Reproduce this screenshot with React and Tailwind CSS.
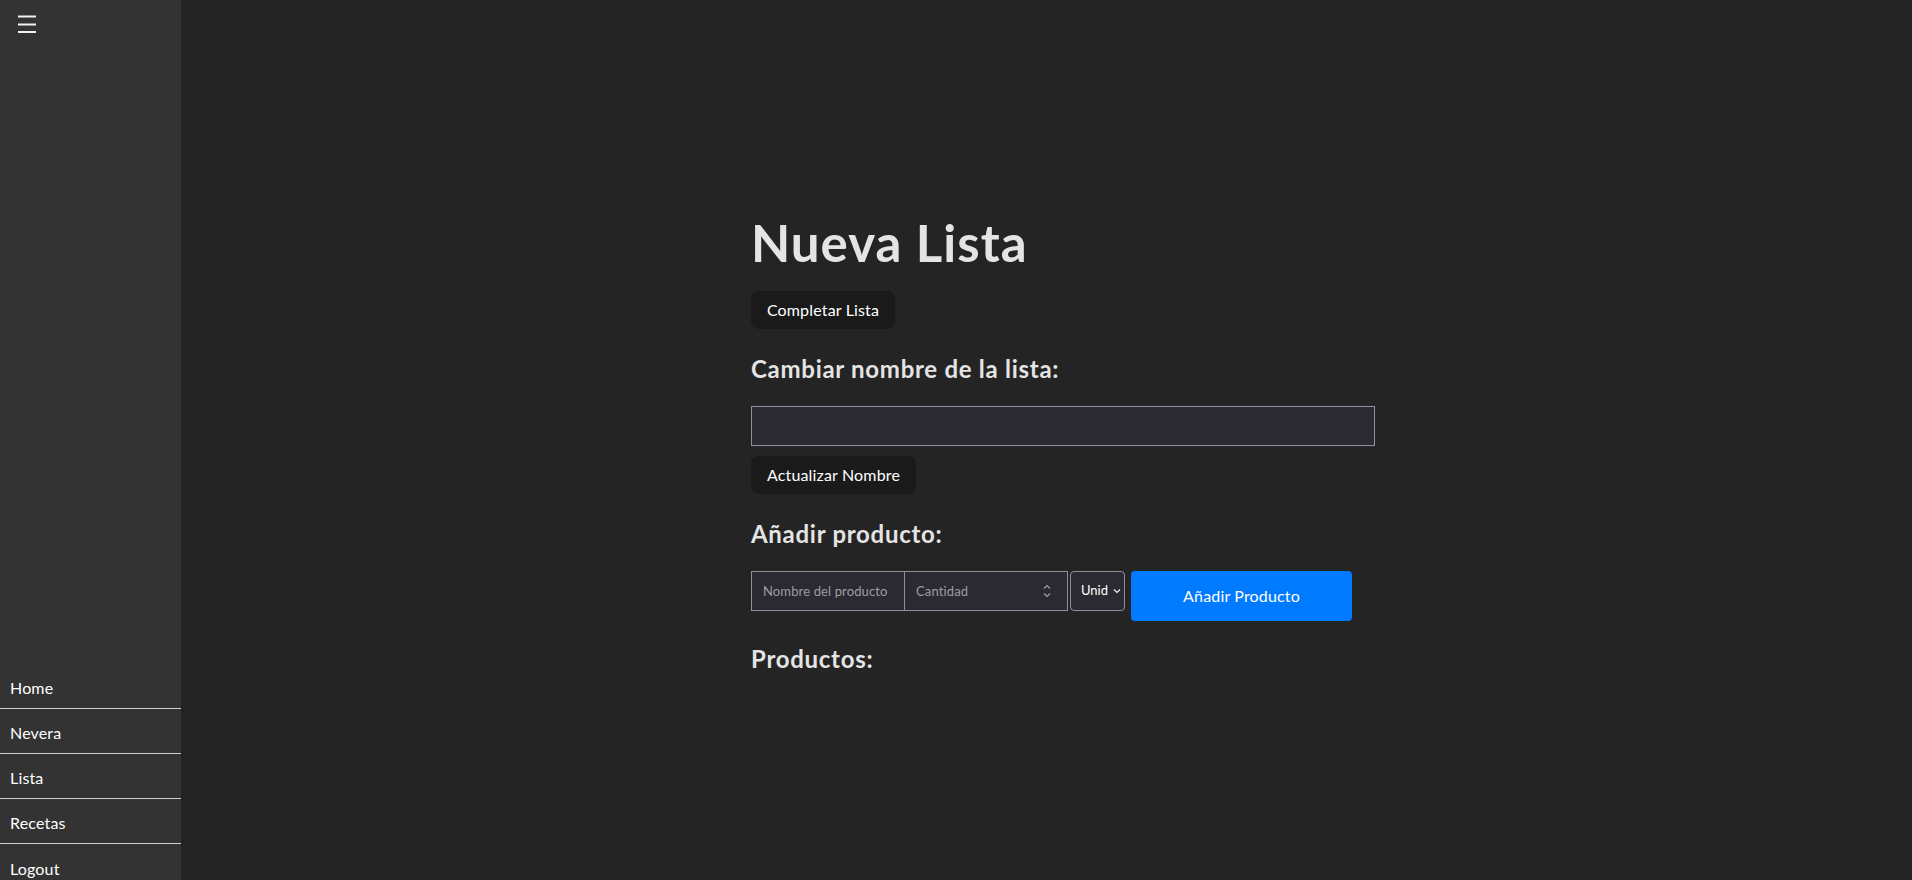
import React from 'react';

const navItems = ['Home', 'Nevera', 'Lista', 'Recetas', 'Logout'];

const Sidebar = () => (
  <aside className="w-[181px] shrink-0 h-[889px] bg-[#333333] flex flex-col">
    <button className="pt-[15px] pl-[18px] self-start">
      <svg width="18" height="18" viewBox="0 0 18 18" className="block">
        <path d="M0 1.5h18M0 9.5h18M0 17h18" stroke="#f2f2f2" strokeWidth="1.8" />
      </svg>
    </button>
    <div className="flex-1" />
    <nav className="flex flex-col">
      {navItems.map((item, i) => (
        <a
          key={item}
          href="#"
          className={`h-[45px] flex items-center px-[10px] pt-[4px] text-[16px] tracking-[0.01em] text-white ${i < navItems.length - 1 ? 'border-b border-[#d0d0d0]' : ''}`}
        >
          {item}
        </a>
      ))}
    </nav>
  </aside>
);

// dark default buttons, fixed widths so the labels sit where they do in the app
const DarkButton = ({ children, width }) => (
  <button className={`h-[38px] ${width} rounded-lg bg-[#1a1a1a] text-[16px] tracking-[0.01em] text-white self-start`}>
    {children}
  </button>
);

const App = () => {
  return (
    <div
      className="h-screen overflow-hidden flex bg-[#242424] text-[#e4e4e4]"
      style={{ fontFamily: 'Lato, "Open Sans", sans-serif' }}
    >
      <Sidebar />
      <main className="flex-1 flex justify-center">
        <div className="w-[657px] pl-[33px] pt-[215px] flex flex-col">
          <h1 className="text-[51px] leading-[56px] font-bold tracking-[0.02em]">Nueva Lista</h1>
          <div className="mt-[20px] flex">
            <DarkButton width="w-[144px]">Completar Lista</DarkButton>
          </div>

          <h2 className="mt-[24px] text-[24px] leading-[32px] font-bold tracking-[0.03em]">Cambiar nombre de la lista:</h2>
          <input
            type="text"
            className="mt-[21px] h-[40px] w-[624px] bg-[#2b2a33] border border-[#8f8f9d] px-2 text-[13px] text-white outline-none"
          />
          <div className="mt-[10px] flex">
            <DarkButton width="w-[165px]">Actualizar Nombre</DarkButton>
          </div>

          <h2 className="mt-[24px] text-[24px] leading-[32px] font-bold tracking-[0.03em]">Añadir producto:</h2>
          <div className="mt-[21px] flex items-start">
            <div className="flex h-[40px] border border-[#8f8f9d] bg-[#2b2a33]">
              <input
                type="text"
                placeholder="Nombre del producto"
                className="w-[152px] h-full px-[11px] bg-transparent text-[13px] tracking-[0.01em] text-white placeholder:text-[#9d9ca5] outline-none"
              />
              <div className="w-[163px] h-full border-l border-[#8f8f9d] flex items-center pr-[16px]">
                <input
                  type="text"
                  placeholder="Cantidad"
                  className="flex-1 min-w-0 h-full pl-[11px] bg-transparent text-[13px] tracking-[0.01em] text-white placeholder:text-[#9d9ca5] outline-none"
                />
                <svg width="8" height="14" viewBox="0 0 8 14" fill="none" stroke="#a3a2ab" strokeWidth="1.1">
                  <path d="M1 4.5l3-3 3 3M1 9.5l3 3 3-3" />
                </svg>
              </div>
            </div>
            <button className="ml-[2px] h-[40px] w-[55px] rounded-[4px] border border-[#8f8f9d] bg-[#2b2a33] flex items-center pl-[10px] gap-[5px] text-[13px] text-white">
              Unid
              <svg width="8" height="6" viewBox="0 0 8 6" fill="none" stroke="#f0f0f0" strokeWidth="1.2">
                <path d="M1 1.5l3 3 3-3" />
              </svg>
            </button>
            <button className="ml-[6px] h-[50px] w-[221px] rounded-[4px] bg-[#007bff] text-[16px] tracking-[0.01em] text-white">
              Añadir Producto
            </button>
          </div>

          <h2 className="mt-[22px] text-[24px] leading-[32px] font-bold tracking-[0.03em]">Productos:</h2>
        </div>
      </main>
    </div>
  );
};

export default App;
